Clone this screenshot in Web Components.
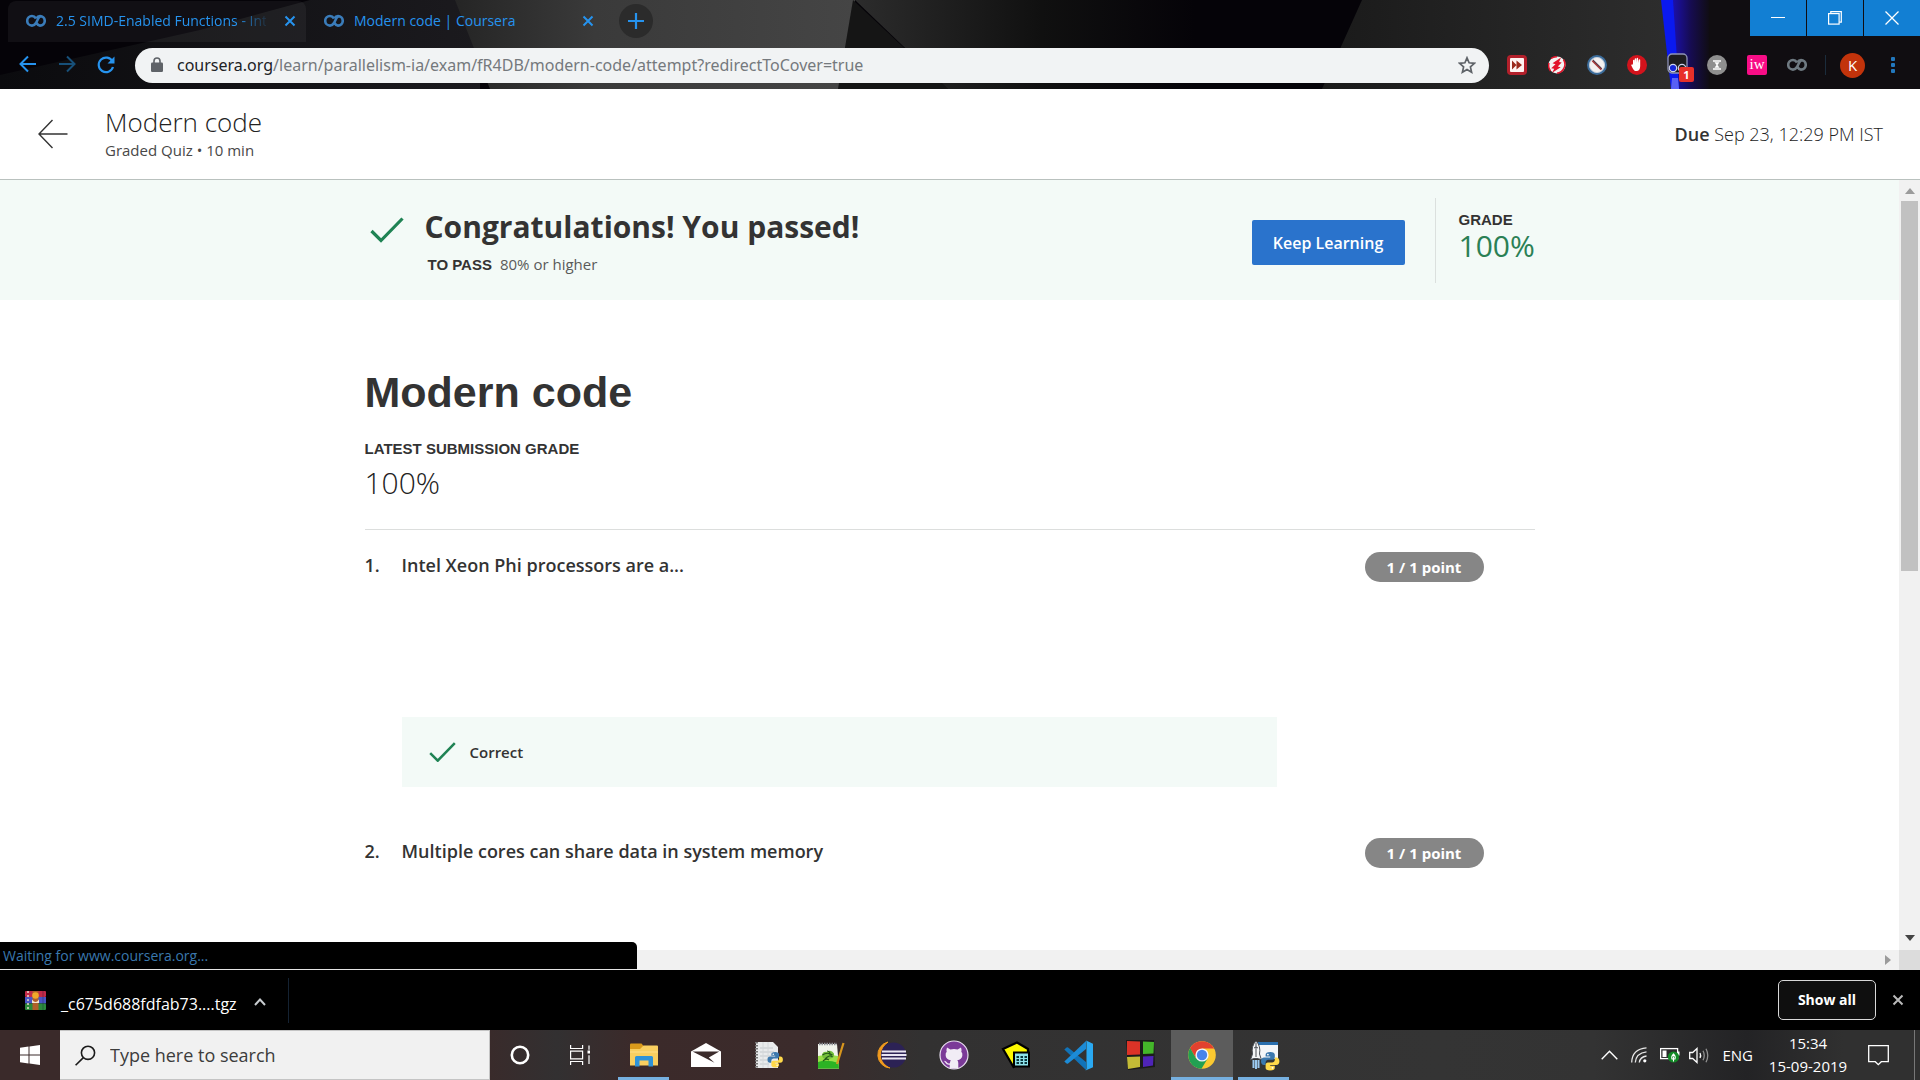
<!DOCTYPE html>
<html lang="en">
<head>
<meta charset="utf-8">
<title>Modern code | Coursera</title>
<style>
html,body{margin:0;height:100%;overflow:hidden}
body{background:#fff;color:#333;font-family:"Open Sans","Noto Sans",sans-serif;font-size:16px}
</style>
</head>
<body>
<app-desktop></app-desktop>
<script>
const define=(name,css,html)=>customElements.define(name,class extends HTMLElement{
  constructor(){
    super();
    const t=document.createElement('template');
    t.innerHTML=`<style>*{box-sizing:border-box}button{font:inherit;color:inherit;background:none;border:0;padding:0;margin:0}${css}</style>${typeof html==='function'?html(this):html}`;
    this.attachShadow({mode:'open'}).append(t.content.cloneNode(true));
  }
  connectedCallback(){ if(this.localName==='ui-icon') this.shadowRoot.querySelector('span').innerHTML=ICONS[this.getAttribute('name')]; }
});

// Two interlocking snakes, drawn on a 20x20 box and scaled into an icon.
const snakes=(x,y,s)=>`<g transform="translate(${x} ${y}) scale(${s})"><path fill="#3b78ad" d="M10 0C6.500 0 5 1.200 5 3v2h5v1H3.500C1.300 6 0 7.600 0 10s1.300 4 3.200 4H5v-2.500C5 9.700 6.400 8.500 8 8.500h4.500C14 8.500 15 7.400 15 6V3c0-1.800-1.600-3-5-3z"/><path fill="#ffd94a" d="M10 20c3.500 0 5-1.200 5-3v-2h-5v-1h6.500c2.200 0 3.500-1.600 3.500-4s-1.300-4-3.200-4H15v2.500c0 1.800-1.400 3-3 3H7.500C6 11.500 5 12.600 5 14v3c0 1.800 1.600 3 5 3z"/><circle cx="7.500" cy="2.800" r="1" fill="#fff"/><circle cx="12.500" cy="17.200" r="1" fill="#fff"/></g>`;

const ICONS={
inf:`<svg width="20" height="14" viewBox="0 0 20 14" fill="none" stroke="currentColor" stroke-width="2.600"><path d="M10 4.500C8.800 2.600 7.600 2 6 2a4.500 4.500 0 1 0 0 9.600c1.900 0 3-1 4-2.600l2-4c.8-1.600 1.700-2.600 3-2.800M10.500 9c1 1.700 2 2.600 3.500 2.600A4.700 4.700 0 0 0 14 2.100c-1.500 0-2.600.7-3.600 2.300"/></svg>`,
x:`<svg width="12" height="12" viewBox="0 0 12 12" fill="none" stroke="currentColor" stroke-width="2"><path d="M1.500 1.500l9 9M10.500 1.500l-9 9"/></svg>`,
plus:`<svg width="16" height="16" viewBox="0 0 16 16" fill="none" stroke="currentColor" stroke-width="2.200"><path d="M8 0v16M0 8h16"/></svg>`,
back:`<svg width="18" height="18" viewBox="0 0 18 18" fill="none" stroke="currentColor" stroke-width="2"><path d="M17 9H2M9 1.500L1.500 9 9 16.500"/></svg>`,
fwd:`<svg width="18" height="18" viewBox="0 0 18 18" fill="none" stroke="currentColor" stroke-width="2"><path d="M1 9h15M9 1.500L16.500 9 9 16.500"/></svg>`,
reload:`<svg width="20" height="20" viewBox="0 0 20 20" fill="none" stroke="currentColor" stroke-width="2.200"><path d="M16.500 6.500A7.300 7.300 0 1 0 17 12"/><path d="M18.500 1.500v7h-7z" fill="currentColor" stroke="none"/></svg>`,
lock:`<svg width="12" height="16" viewBox="0 0 12 16"><rect y="5.500" width="12" height="9.500" rx="1.200" fill="#5f6368"/><path d="M3 6V4a3 3 0 0 1 6 0v2" fill="none" stroke="#5f6368" stroke-width="1.600"/></svg>`,
star:`<svg width="18" height="18" viewBox="0 0 18 18" fill="none" stroke="#5f6368" stroke-width="1.700"><path d="M9 1.800l2.100 5 5.400.5-4.100 3.600 1.200 5.300L9 13.400l-4.600 2.800 1.200-5.300L1.500 7.300l5.400-.5z"/></svg>`,
ff:`<svg width="20" height="20" viewBox="0 0 20 20"><rect width="20" height="20" rx="4" fill="#b3202b"/><rect x="3" y="3" width="14" height="14" rx="1" fill="#fff4f2"/><path fill="#9c2a1c" d="M5 5.500l4.500 4.500L5 14.500zM9.500 5.500l5.500 4.500-5.500 4.500z"/></svg>`,
bolt:`<svg width="18" height="18" viewBox="0 0 18 18"><circle cx="9" cy="9" r="8.500" fill="#f4f1f1"/><path d="M3 2.500A9 9 0 0 1 9 .8M15.500 3.500A9 9 0 0 1 9 17.200M2.500 15A9 9 0 0 1 1 7" fill="none" stroke="#e2132a" stroke-width="1.500"/><path fill="#e2132a" d="M13 1.500L4.500 7.300l3 .9-4.300 4 3 .6-2 4 8.500-5.500-2.900-.9 3.900-3.800-2.600-.7z"/></svg>`,
no:`<svg width="20" height="20" viewBox="0 0 20 20"><circle cx="10" cy="10" r="10" fill="#3c6d9c"/><circle cx="10" cy="10" r="7.600" fill="#f4f0ef" stroke="#c3cedb"/><path d="M5.500 5.500l9 9" stroke="#a33a3a" stroke-width="2.200"/><path d="M6 4.800l8.800 8.700" stroke="#23334d" stroke-width=".8"/></svg>`,
hand:`<svg width="20" height="20" viewBox="0 0 20 20"><circle cx="10" cy="10" r="10" fill="#d3131c"/><path fill="#fff" d="M6 8.200V5.500c0-1 1.500-1 1.500 0V8l.2-4c0-1 1.500-1 1.500 0l.1 3.800.3-4.300c0-1 1.500-1 1.500 0v4.400l.6-3.100c.3-.9 1.600-.7 1.500.2V11c0 3-1.300 5-3.700 5-1.800 0-2.900-1-3.700-2.600L4.300 10.500c-.3-1 .8-1.400 1.400-.7z"/></svg>`,
dots:`<svg width="28" height="28" viewBox="0 0 28 28"><rect x="1" y="1" width="19" height="19" rx="4" fill="#1d1c20" stroke="#8e93b5" stroke-width="1.300"/><circle cx="6" cy="15" r="3.700" fill="#1626d8" stroke="#cfd3ee" stroke-width="1.200"/><circle cx="15" cy="15" r="3.700" fill="none" stroke="#cfd3ee" stroke-width="1.200"/></svg>`,
hour:`<svg width="20" height="20" viewBox="0 0 20 20"><circle cx="10" cy="10" r="10" fill="#8f8f8f"/><path d="M6 6h8M6 14h8" stroke="#fff" stroke-width="1.300"/><path fill="#fff" d="M7.500 7.200h5L10.500 10l2 2.800h-5l2-2.800z"/></svg>`,
min:`<svg width="14" height="12" viewBox="0 0 14 12" stroke="#fff"><path d="M0 5.500h14"/></svg>`,
restore:`<svg width="14" height="14" viewBox="0 0 14 14" fill="none" stroke="#fff" stroke-width="1.200"><rect x=".6" y="2.600" width="10.500" height="10.500"/><path d="M2.800 2.500V.6h10.500v10.500h-2"/></svg>`,
close:`<svg width="14" height="14" viewBox="0 0 14 14" stroke="#fff" stroke-width="1.300"><path d="M.5.500l13 13M13.500.5l-13 13"/></svg>`,
more:`<svg width="4" height="18" viewBox="0 0 4 18" fill="#2277bd"><rect y="1" width="4" height="4" rx="1"/><rect y="7" width="4" height="4" rx="1"/><rect y="13" width="4" height="4" rx="1"/></svg>`,
arrow:`<svg width="30" height="30" viewBox="0 0 30 30" fill="none" stroke="#333" stroke-width="1.400"><path d="M29.500 15H1M14.500 1L1 15l13.500 14"/></svg>`,
check:`<svg viewBox="0 0 34 26" width="100%" fill="none" stroke="#1f8354" stroke-width="3.200" style="display:block"><path d="M1.500 14l9.500 9.500L32.500 1.500"/></svg>`,
rar:`<svg width="21" height="19" viewBox="0 0 21 19"><rect width="21" height="6" rx="1" fill="#c22a48"/><rect y="6" width="21" height="6.500" fill="#4a55c4"/><rect y="12.500" width="21" height="6.500" rx="1" fill="#2b8a3c"/><path d="M3 0v19" stroke="#e7d9c9" stroke-width="1.500" stroke-dasharray="2 2"/><path d="M18 0v19" stroke="#1a1a33" stroke-opacity=".35"/><rect x="7.500" width="6" height="19" fill="#b0602a"/><circle cx="10.500" cy="4.500" r="3.300" fill="#f0a92a"/><path d="M7 8.500q3.500 5 7 0v3.500H7z" fill="#f3e6d0"/></svg>`,
caret:`<svg width="12" height="8" viewBox="0 0 12 8" fill="none" stroke="#c8ccd0" stroke-width="2"><path d="M1 7l5-5.500L11 7"/></svg>`,
win:`<svg width="20" height="20" viewBox="0 0 20 20" fill="#fff"><path d="M0 2.800L8.500 1.600v7.900H0zM9.500 1.500L20 0v9.500H9.500zM0 10.500h8.500v7.900L0 17.200zM9.500 10.500H20V20L9.500 18.500z"/></svg>`,
mag:`<svg width="21" height="21" viewBox="0 0 21 21" fill="none" stroke="#1b1b1b" stroke-width="1.600"><circle cx="13" cy="7.800" r="6.600"/><path d="M8.400 12.600L.6 20.300"/></svg>`,
cort:`<svg width="22" height="22" viewBox="0 0 22 22"><circle cx="11" cy="11" r="8.200" fill="none" stroke="#fff" stroke-width="2.600"/></svg>`,
task:`<svg width="20" height="20" viewBox="0 0 20 20" fill="none" stroke="#fff" stroke-width="1.200"><path d="M.6 0v3.500h12V0M.6 20v-3.500h12V20M.6 6.200h12v7.600H.6zM19 .5v4.200M19 10.300V19"/><path d="M17.500 5.500h3v3h-3z" fill="#fff" stroke="none"/></svg>`,
folder:`<svg width="28" height="24" viewBox="0 0 28 24"><path fill="#d99a1b" d="M0 1.500Q0 .5 1 .5h10.500l2.500 3V8H0z"/><path fill="#f9cf60" d="M0 6h10l3.500-3.500H27q1 0 1 1v19H0z"/><path fill="#ffe08a" d="M0 8h28v2H0z" opacity=".5"/><path fill="#2f93d8" d="M5 23.500V14.500q0-1.500 1.500-1.500h15q1.500 0 1.500 1.500v9h-4.500V17.500h-9v6z"/></svg>`,
mail:`<svg width="30" height="24" viewBox="0 0 30 24"><path fill="#fff" d="M0 8.500L15 0l15 8.500V24H0z"/><path fill="#3b2c2c" d="M1.500 8.600h26.800L17.800 14.500l5.700 5.300L1.500 8.600z"/></svg>`,
pynote:`<svg width="29" height="29" viewBox="0 0 29 29"><path fill="#e9ebec" d="M2 1h17l5 5v21H2z"/><path d="M2.500 1v26" stroke="#777" stroke-width="3" stroke-dasharray="1.500 1.500"/><path d="M6 7h13M6 11h14M6 15h12M6 19h10M6 23h9" stroke="#c3c8cc"/><path d="M9 1v26M14 1v26" stroke="#d4d8da"/>${snakes(13.500,11,.77)}</svg>`,
npp:`<svg width="29" height="29" viewBox="0 0 29 29"><path fill="#f1f4ec" d="M2 3h19l2 24.500H2z"/><path d="M3 3h18" stroke="#8d9096" stroke-width="2.500" stroke-dasharray="1.500 1"/><path fill="#9be04a" d="M2 15q10-2 20 0l1 12.500H2z"/><path fill="#2cb324" d="M2 21q9-3 20.500 1l.5 5.500H2z"/><path fill="#74bf3c" d="M6 14q1-4 5-3 4-3 7 1.500 1 4.500-5 5.500-7 .8-7-4z"/><path d="M6.500 14q4.500-3.500 10 0M9 18q5-5 7.500-2M11 10q3.500.5 3 4M7 20q3-3 6-1" stroke="#255c1a" fill="none" stroke-width="1.200"/><path d="M27.500 2L21 23" stroke="#d8961d" stroke-width="2.200"/></svg>`,
ecl:`<svg width="30" height="28" viewBox="0 0 30 28"><path d="M11 1A13.200 13.200 0 0 0 13 27A15 15 0 0 1 11 1z" fill="#f09a1e" stroke="#f09a1e"/><circle cx="16.500" cy="14" r="12.600" fill="#2c2255"/><path d="M5 10.500h24M4.500 14h25M5 17.500h24" stroke="#e9e6f3" stroke-width="1.900"/></svg>`,
gh:`<svg width="30" height="30" viewBox="0 0 30 30"><circle cx="15" cy="15" r="14" fill="#7b3a98" stroke="#e8dff0" stroke-width="1.200"/><path fill="#f1ecf5" d="M8 7.500l3.400 2q3.600-1 7.200 0l3.400-2q.8 2 .3 4.200Q23.800 13 23.300 16q-.6 3.500-5 4.300 1 1.200 1 3v5.200h-8.600v-3.800q-3 .5-4.300-2l-1.500-2q2.200 0 3.100 1.800 1 1.300 2.900.7.200-2 .9-2.900Q7.200 19.500 6.700 16q-.5-3 1-4.300-.5-2.200.3-4.200z"/></svg>`,
exc:`<svg width="30" height="29" viewBox="0 0 30 29"><path d="M2 8L16 1.500 27 8v9L12.500 26z" fill="#fdf900" stroke="#000" stroke-width="2.200"/><rect x="13" y="11.500" width="15" height="14" fill="#8de3ea" stroke="#000" stroke-width="2"/><path d="M15.500 16h2.500M19.500 16h2.500M23.500 16H26M15.500 19h2.500M19.500 19h2.500M23.500 19H26M15.500 22h2.500M19.500 22h2.500M23.500 22H26" stroke="#08363c" stroke-width="1.900"/></svg>`,
vsc:`<svg width="31" height="31" viewBox="0 0 31 31"><path fill="#1173b8" d="M1.300 9.500l2.300-2q.7-.5 1.500 0L23 22v8z"/><path fill="#1c8bd6" d="M1.300 21.500l2.300 2q.7.500 1.500 0L23 9V1z"/><path fill="#2aa9f2" d="M23 .5l7 3.200v23.600L22.500 30.500q1-.8 1-2V2.500q0-1.300-.5-2z"/></svg>`,
cube:`<svg width="29" height="30" viewBox="0 0 29 30"><path fill="#1b1b1b" d="M0 0h28l1 27-27 3z"/><path fill="#dc3327" d="M1 1l13 .5v13L1 15z"/><path fill="#44b62a" d="M17 1.500L28 2l-.5 11.500L17 14z"/><path fill="#c3bb36" d="M1 17l13-.5V27L2 29z"/><path fill="#4f24b8" d="M17 16.500l10.500-.5-.5 9.500L17 27z"/></svg>`,
chrome:`<svg width="28" height="28" viewBox="0 0 28 28"><circle cx="14" cy="14" r="13.800" fill="#fbc931"/><path fill="#e2412f" d="M2 7.200A13.800 13.800 0 0 1 26.200 7.500H14L8.200 17.200z"/><path fill="#22a052" d="M2.100 7A13.800 13.800 0 0 0 13.500 27.800L19.800 17.300 14 14l-5.900 3.400z"/><circle cx="14" cy="14" r="6.600" fill="#f3f5f8"/><circle cx="14" cy="14" r="5.200" fill="#4683ea"/></svg>`,
rocket:`<svg width="31" height="31" viewBox="0 0 31 31"><path fill="#f4f6f8" d="M9 3h20v16H9z"/><path fill="#2a6fae" d="M9 2h20v3H9z"/><path fill="#f4f6f8" stroke="#4a4f55" d="M7 1q5 5 3.500 13l2 6-3-1.500h-5L1.500 20l2-6Q2 6 7 1z"/><path d="M7 3v14M5 8q2-2 4 0" stroke="#4a4f55" fill="none"/><path d="M4.500 20v8M7 20v9M9.500 20v8" stroke="#9ac8ee" stroke-width="2"/>${snakes(12,12,.92)}</svg>`,
up:`<svg width="17" height="10" viewBox="0 0 17 10" fill="none" stroke="#fff" stroke-width="1.400"><path d="M.7 9.200L8.500 1.200l7.800 8"/></svg>`,
wifi:`<svg width="16" height="16" viewBox="0 0 16 16" fill="none" stroke="#e8e8e8" stroke-width="1.300"><path d="M.7 15.500Q1 2 15.500.8M4.300 15.500Q5 6 15.500 4.800M8.300 15.500Q9 10 15.500 9"/><circle cx="13.800" cy="13.800" r="1.600" fill="#fff" stroke="none"/></svg>`,
bat:`<svg width="20" height="16" viewBox="0 0 20 16"><rect x=".6" y="1.600" width="17" height="10" fill="none" stroke="#fff" stroke-width="1.300"/><path d="M18 4.500h1.500v4H18" fill="#fff"/><path d="M2.500 3.500h4v6.500h-4z" fill="#fff"/><circle cx="13.500" cy="10" r="5.600" fill="#128a26"/><path d="M13.500 7q-2.500 2.500-1.500 5h3q1-2.500-1.500-5zM13.500 9.500v5" stroke="#fff" fill="none" stroke-width="1.100"/></svg>`,
vol:`<svg width="21" height="17" viewBox="0 0 21 17" fill="none" stroke="#fff" stroke-width="1.300"><path d="M.7 5.500h3L8 1.500v14L3.700 11.500h-3z"/><path d="M11 6q1.300 2.500 0 5"/><path d="M14 3.800q2.500 4.700 0 9.400M17 1.800q3.500 6.700 0 13.400" stroke="#909090"/></svg>`,
note:`<svg width="21" height="21" viewBox="0 0 21 21" fill="none" stroke="#fff" stroke-width="1.300"><path d="M.7.700h19.600v16h-7l-3 3-3-3H.7z"/></svg>`,
tri:`<svg width="10" height="6" viewBox="0 0 10 6" style="display:block"><path fill="currentColor" d="M5 0l5 6H0z"/></svg>`
};
define('ui-icon',`:host{display:inline-flex;flex:none}span{display:flex;width:100%}`,`<span></span>`);

define('browser-tab',`:host{display:flex;width:304px;height:41px;align-items:center;padding:0 16px 0 18px;gap:10px;color:#2693ee;font-size:14px;line-height:20px;border-radius:8px 8px 0 0}
:host([idle]){width:298px;padding-right:10px;background:#ffffff0d}
.f{color:#3a7cba}.t{flex:1;min-width:0;overflow:hidden;white-space:nowrap}
:host([idle]) .t{margin-right:8px;-webkit-mask:linear-gradient(90deg,#000 calc(100% - 30px),#0002);mask:linear-gradient(90deg,#000 calc(100% - 30px),#0002)}
button{display:flex}`,`<ui-icon class="f" name="inf"></ui-icon><div class="t"><slot></slot></div><button aria-label="Close tab"><ui-icon name="x"></ui-icon></button>`);

define('theme-art',`:host{position:absolute;inset:0;z-index:-1;background:#050308}svg{width:100%;height:100%;display:block}`,
`<svg viewBox="0 0 1920 89" preserveAspectRatio="none"><defs>
<linearGradient id="a"><stop offset="0" stop-color="#252525"/><stop offset=".35" stop-color="#3a3a3a"/><stop offset="1" stop-color="#454545"/></linearGradient>
<linearGradient id="b"><stop offset="0" stop-color="#2c2c2c"/><stop offset=".55" stop-color="#101010"/><stop offset="1" stop-color="#050308"/></linearGradient>
<linearGradient id="c"><stop offset="0" stop-color="#1a1a1a"/><stop offset=".4" stop-color="#222"/><stop offset="1" stop-color="#2e2e2e"/></linearGradient>
<linearGradient id="d"><stop offset="0" stop-color="#1c10b0"/><stop offset=".5" stop-color="#160c50"/><stop offset="1" stop-color="#100d11"/></linearGradient>
<linearGradient id="e"><stop offset="0" stop-color="#0b0b0e"/><stop offset="1" stop-color="#1b1a1e"/></linearGradient></defs>
<path fill="url(#e)" d="M0 75L200 30 310 0h170v89H0z"/><path fill="url(#a)" d="M455 0h400l-15 89H490z"/>
<path fill="#151515" d="M853 0l-15 89h110z"/><path fill="url(#b)" d="M855 0h340v89H948z"/>
<path fill="url(#c)" d="M1362 0h308l14 89h-362z"/>
<path fill="url(#d)" d="M1672 0h38v89h-34z"/><path fill="#100d11" d="M1709 0h211v89h-211z"/>
<path fill="#0a19f0" d="M1661 0h12l6 89h-8z"/><path fill="#5860f4" d="M1672 78h6l1 11h-8z"/></svg>`);

define('browser-chrome',`:host{display:block;position:relative;z-index:0;color:#2693ee}
.tabs{display:flex;height:42px;padding-left:8px;align-items:center}
.new{width:34px;height:34px;border-radius:50%;background:#2b2b2b;display:flex;align-items:center;justify-content:center;margin-left:9px}
.w{margin-left:auto;display:flex;gap:1px;align-self:flex-start}.w button{width:56px;height:36px;background:#127fd3;display:flex;align-items:center;justify-content:center}
.bar{display:flex;height:47px;align-items:center;padding:0 9px 1px 8px}
.nav{display:flex}.nav button{width:39px;display:flex;justify-content:center}.nav .dim{color:#175079}
.url{flex:1;display:flex;align-items:center;height:35px;border-radius:18px;background:#f1f3f4;margin-left:10px;padding:0 13px 0 16px;font-family:"Noto Sans",sans-serif;font-size:16px;line-height:22px}
.url label{color:#202124;margin-left:14px}.url input{flex:1;min-width:0;border:0;padding:0;margin:0;background:none;font:inherit;color:#75797d;outline:0}
.ext{display:flex;align-items:center;margin-left:8px}.ext button{width:40px;height:30px;display:flex;align-items:center;justify-content:center;position:relative}
.iw b{width:20px;height:20px;background:#f80d86;color:#fff;border-radius:2px;font:15px/18px "Liberation Serif",serif}
.b{position:absolute;left:22px;top:17px;width:15px;height:15px;background:#e8302a;border-radius:2px;color:#fff;font:bold 11px/15px "Open Sans",sans-serif;text-align:center}
.dot{margin:4px 0 0 8px}
.sep{width:1px;height:20px;background:#1b2c3c;margin:0 14px 0 8px}
.av b{width:25px;height:25px;border-radius:50%;background:#c2330b;color:#fff;font:400 15px/25px "Open Sans",sans-serif}`,
`<theme-art></theme-art><div class="tabs"><browser-tab idle>2.5 SIMD-Enabled Functions - Intel</browser-tab><browser-tab>Modern code | Coursera</browser-tab><button class="new" aria-label="New tab"><ui-icon name="plus"></ui-icon></button>
<div class="w"><button aria-label="Minimize"><ui-icon name="min"></ui-icon></button><button aria-label="Restore"><ui-icon name="restore"></ui-icon></button><button aria-label="Close"><ui-icon name="close"></ui-icon></button></div></div>
<div class="bar"><div class="nav"><button aria-label="Back"><ui-icon name="back"></ui-icon></button><button class="dim" aria-label="Forward"><ui-icon name="fwd"></ui-icon></button><button aria-label="Reload"><ui-icon name="reload"></ui-icon></button></div>
<div class="url"><ui-icon name="lock"></ui-icon><label for="u">coursera.org</label><input id="u" value="/learn/parallelism-ia/exam/fR4DB/modern-code/attempt?redirectToCover=true"><ui-icon name="star"></ui-icon></div>
<div class="ext"><button aria-label="Fast forward"><ui-icon name="ff"></ui-icon></button><button aria-label="Flash"><ui-icon name="bolt"></ui-icon></button><button aria-label="Blocker"><ui-icon name="no"></ui-icon></button><button aria-label="Stop"><ui-icon name="hand"></ui-icon></button><button aria-label="Tracker"><ui-icon class="dot" name="dots"></ui-icon><span class="b">1</span></button><button aria-label="Timer"><ui-icon name="hour"></ui-icon></button><button class="iw"><b>iw</b></button><button style="color:#6f7a82" aria-label="Coursera"><ui-icon name="inf"></ui-icon></button><span class="sep"></span><button class="av" style="width:25px"><b>K</b></button><button aria-label="Menu" style="width:36px;margin-left:10px"><ui-icon name="more"></ui-icon></button></div></div>`);

define('quiz-header',`:host{display:flex;align-items:center;height:91px;padding:0 37px 0 38px;background:#fff;border-bottom:1px solid #b9c1be}
button{display:flex}.t{margin-left:37px;flex:1}h2{margin:0;font-size:26px;line-height:32px;font-weight:300;color:#222}p{margin:0;font-size:15px;line-height:24px;font-weight:400;color:#484848}
.due{font-size:18px;line-height:24px;font-weight:300;color:#222}.due b{font-weight:600;color:#333}`,
`<button aria-label="Back"><ui-icon name="arrow"></ui-icon></button><div class="t"><h2>Modern code</h2><p>Graded Quiz • 10 min</p></div><div class="due"><b>Due</b> Sep 23, 12:29 PM IST</div>`);

define('pass-banner',`:host{display:block;background:#f3faf7}.in{max-width:1170px;margin:0 auto;height:120px;display:flex;align-items:center}
.ck{width:34px;align-self:flex-start;margin:37px 21px 0 5px}.t{flex:1;padding-top:2px}h1{margin:0;font-size:30px;line-height:40px;font-weight:700}
.s{display:flex;gap:8px;margin-left:3px;font-size:15px;line-height:20px;margin-top:7px;align-items:baseline}.l{font:bold 15px/20px "Liberation Sans",sans-serif}.s span{font-weight:400;color:#5a5a5a}
.k{width:153px;height:45px;margin-top:5px;background:#2a73cc;border-radius:2px;color:#fff;font-weight:600;font-size:16px;line-height:24px}
.g{border-left:1px solid #dbe0de;margin-left:30px;width:100px;height:85px;padding:12px 0 0 23px}.v{font-size:30px;line-height:32px;font-weight:400;color:#2a8055}`,
`<div class="in"><ui-icon class="ck" name="check"></ui-icon><div class="t"><h1>Congratulations! You passed!</h1><div class="s"><b class="l">TO PASS</b><span>80% or higher</span></div></div><button class="k">Keep Learning</button><div class="g"><div class="l">GRADE</div><div class="v">100%</div></div></div>`);

define('quiz-question',`:host{display:block;height:286px;padding-top:22px}
.q{display:flex;align-items:flex-start}.n{width:37px}.n,.t{font-size:18px;line-height:26px;font-weight:600}.t{flex:1}
.p{width:119px;height:30px;margin-right:51px;border-radius:15px;background:#868686;color:#fff;font-size:15px;line-height:30px;font-weight:700;text-align:center}
.a{display:flex;align-items:center;gap:14px;margin:135px 258px 0 37px;height:70px;padding-left:27px;background:#f3faf7;font-size:15px;line-height:20px;font-weight:600}
.a ui-icon{width:27px}`,
h=>`<div class="q"><div class="n">${h.getAttribute('number')}</div><div class="t"><slot></slot></div><div class="p">1 / 1 point</div></div>${h.hasAttribute('correct')?'<div class="a"><ui-icon name="check"></ui-icon>Correct</div>':''}`);

define('quiz-body',`:host{display:block;max-width:1170px;margin:0 auto;padding-top:64px}
h1{margin:0;font:bold 43px/56px "Liberation Sans",sans-serif}.l{margin-top:19px;font:bold 15px/20px "Liberation Sans",sans-serif}.v{font-size:30px;line-height:40px;font-weight:300;margin-top:4px;color:#222}
hr{border:0;border-top:1px solid #dcdedd;margin:26px 0 0}`,
`<h1>Modern code</h1><div class="l">LATEST SUBMISSION GRADE</div><div class="v">100%</div><hr><quiz-question number="1." correct>Intel Xeon Phi processors are a...</quiz-question><quiz-question number="2.">Multiple cores can share data in system memory</quiz-question>`);

define('scroll-rail',`:host{display:flex;background:#f1f1f1;justify-content:space-between;align-items:center;color:#9b9b9b}
:host([v]){width:21px;flex-direction:column;padding:8px 0 9px}:host([v]) i{width:17px;flex:1;margin:7px 0}i b{display:block;height:370px;background:#c1c1c1;width:100%}
:host([h]){height:20px;padding-right:6px;justify-content:flex-end}:host([h]) i,:host([h]) .u{display:none}:host([h]) .d{transform:rotate(90deg)}:host([v]) .d{transform:rotate(180deg);color:#444}`,
`<ui-icon class="u" name="tri"></ui-icon><i><b></b></i><ui-icon class="d" name="tri"></ui-icon>`);

define('status-bubble',`:host{display:block;background:#000;color:#3a78ad;width:637px;height:28px;border:solid #e4e4e4;border-width:0 0 1px;border-radius:0 5px 0 0;padding-left:3px;font-size:14px;line-height:27px}`,`<slot></slot>`);

define('web-view',`:host{display:grid;grid-template:minmax(0,1fr) 20px/minmax(0,1fr) 21px;min-height:0;position:relative}.c{overflow:hidden;background:#fff}.k{background:#dcdcdc}
status-bubble{position:absolute;left:0;bottom:0}`,
`<div class="c"><pass-banner></pass-banner><quiz-body></quiz-body></div><scroll-rail v></scroll-rail><scroll-rail h></scroll-rail><div class="k"></div><status-bubble>Waiting for www.coursera.org...</status-bubble>`);

define('download-shelf',`:host{display:flex;height:60px;background:#000;color:#fff;align-items:center;padding:0 16px 0 25px}
.f{display:flex;align-items:center}.n{margin:7px 17px 0 15px;font-size:16px;line-height:22px}.sep{width:1px;height:45px;background:#142232;margin-left:22px}
.s{margin-left:auto;width:98px;height:40px;border:1px solid #d8d8d8;border-radius:5px;background:#0f0f0f;font-weight:700;font-size:14px;line-height:20px}.x{display:flex;margin-left:16px;color:#b9b9b9}`,
`<button class="f"><ui-icon name="rar"></ui-icon><span class="n">_c675d688fdfab73....tgz</span></button><button aria-label="Options"><ui-icon name="caret"></ui-icon></button><span class="sep"></span><button class="s">Show all</button><button class="x" aria-label="Close"><ui-icon name="x"></ui-icon></button>`);

define('task-item',`:host{display:block;width:62px;height:50px}button{width:100%;height:100%;display:flex;align-items:center;justify-content:center;position:relative}
:host([active]){background:#5c5c5c}:host([open]) button::after,:host([active]) button::after{content:"";position:absolute;left:5px;right:6px;bottom:0;height:3px;background:#76b0e0}:host([active]) button::after{left:0;right:0}`,
h=>`<button aria-label="${h.getAttribute('icon')}"><ui-icon name="${h.getAttribute('icon')}"></ui-icon></button>`);

define('task-bar',`:host{display:flex;height:50px;align-items:stretch;color:#fff;background:linear-gradient(90deg,#3a2a2a 0,#3a2a2a 25%,#323031 29%,#3b2a2a 33%,#3b2b2b 42%,#323131 48%,#343434 75%,#333 83%,#232325 91%,#303030 96%)}
.st{width:60px;display:flex;align-items:center;justify-content:center}.se{width:430px;background:#f1f1f1;border:1px solid #c4c4c4;border-left:0;display:flex;align-items:center;padding-left:15px}
.se label{display:flex}.se input{flex:1;min-width:0;border:0;background:none;font:400 18px/24px "Open Sans",sans-serif;margin-left:14px;padding:0;outline:0}.se input::placeholder{color:#3c3c3c;opacity:1}
.sp{width:3px}.tray{margin-left:auto;display:flex;align-items:center}.tray>*{flex:none}.lang{font-size:15px;margin-left:12px}.clock{font-size:15px;line-height:23px;text-align:center;white-space:nowrap;width:80px;margin:0 20px 0 15px}
.end{width:6px;margin-left:25px;align-self:stretch;border-left:1px solid #777}.g{margin-left:13px}`,
`<button class="st" aria-label="Start"><ui-icon name="win"></ui-icon></button><div class="se"><label for="s" aria-label="Search"><ui-icon name="mag"></ui-icon></label><input id="s" placeholder="Type here to search"></div>
<task-item icon="cort" style="width:60px"></task-item><task-item icon="task" style="width:60px"></task-item><span class="sp"></span>
<task-item icon="folder" open></task-item><task-item icon="mail"></task-item><task-item icon="pynote"></task-item><task-item icon="npp"></task-item><task-item icon="ecl"></task-item><task-item icon="gh"></task-item><task-item icon="exc"></task-item><task-item icon="vsc"></task-item><task-item icon="cube"></task-item><task-item icon="chrome" active></task-item><task-item icon="rocket" open></task-item>
<div class="tray"><ui-icon name="up"></ui-icon><ui-icon class="g" name="wifi"></ui-icon><ui-icon class="g" name="bat"></ui-icon><ui-icon style="margin-left:9px" name="vol"></ui-icon><span class="lang">ENG</span><div class="clock">15:34<br>15-09-2019</div><ui-icon name="note"></ui-icon><span class="end"></span></div>`);

define('app-desktop',`:host{display:flex;flex-direction:column;height:100vh}web-view{flex:1}`,
`<browser-chrome></browser-chrome><quiz-header></quiz-header><web-view></web-view><download-shelf></download-shelf><task-bar></task-bar>`);
</script>
</body>
</html>
